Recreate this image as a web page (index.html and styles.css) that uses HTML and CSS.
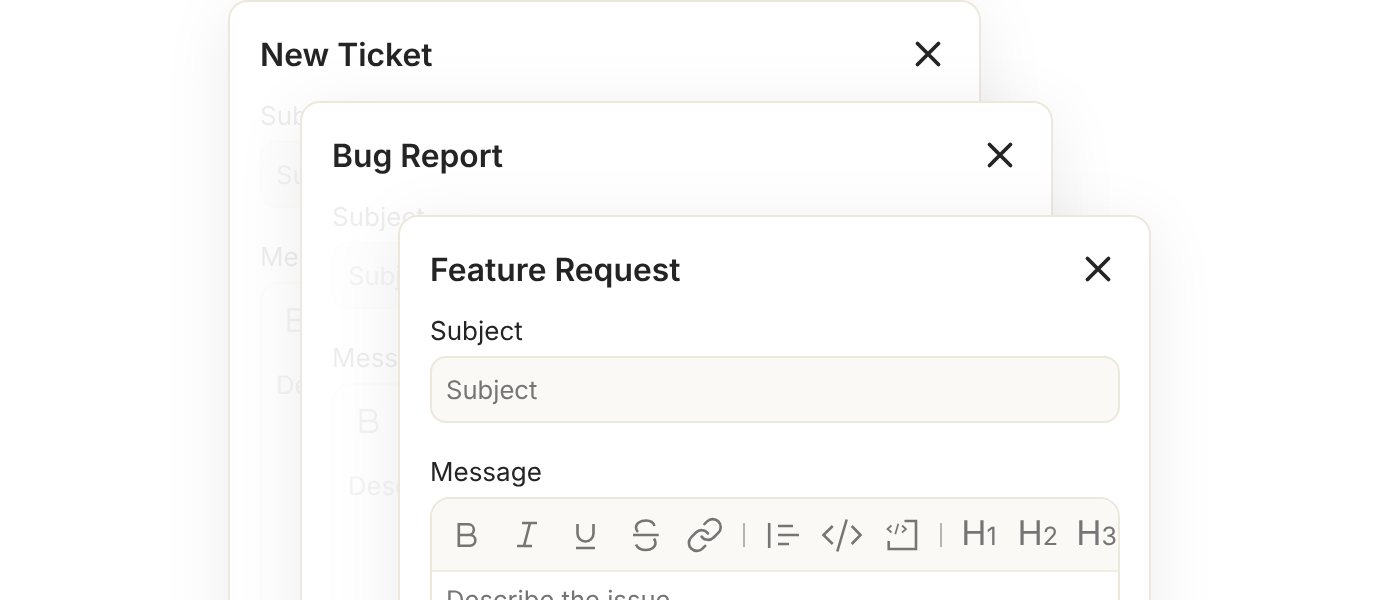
FILE: index.html
```html
<!DOCTYPE html>
<html lang="en">
<head>
<meta charset="utf-8">
<title>Ticket dialogs</title>
<link rel="stylesheet" href="styles.css">
</head>
<body>
<main class="canvas">

<section class="card card-one">
  <header class="card-head"><h2 class="card-title">New Ticket</h2>
    <svg class="close" viewBox="0 0 40 40"><path d="M9.5 9.5 30.5 30.5M30.5 9.5 9.5 30.5"/></svg></header>
  <div class="card-body faded">
    <div class="label">Subject</div>
    <div class="input">Subject</div>
    <div class="label label-second">Message</div>
    <div class="editor"><div class="toolbar"><svg class="tool" viewBox="0 0 40 40"><path d="M12.8 9.3H22.5a5.35 5.35 0 0 1 0 10.7H12.8ZM12.8 20H24a5.35 5.35 0 0 1 0 10.7H12.8Z"/></svg></div>
    <div class="editor-text">Describe the issue</div></div>
  </div>
</section>

<section class="card card-two">
  <header class="card-head"><h2 class="card-title">Bug Report</h2>
    <svg class="close" viewBox="0 0 40 40"><path d="M9.5 9.5 30.5 30.5M30.5 9.5 9.5 30.5"/></svg></header>
  <div class="card-body faded">
    <div class="label">Subject</div>
    <div class="input">Subject</div>
    <div class="label label-second">Message</div>
    <div class="editor"><div class="toolbar"><svg class="tool" viewBox="0 0 40 40"><path d="M12.8 9.3H22.5a5.35 5.35 0 0 1 0 10.7H12.8ZM12.8 20H24a5.35 5.35 0 0 1 0 10.7H12.8Z"/></svg></div>
    <div class="editor-text">Describe the issue</div></div>
  </div>
</section>

<section class="card card-three">
  <header class="card-head"><h2 class="card-title">Feature Request</h2>
    <svg class="close" viewBox="0 0 40 40"><path d="M9.5 9.5 30.5 30.5M30.5 9.5 9.5 30.5"/></svg></header>
  <div class="card-body">
    <div class="label">Subject</div>
    <div class="input">Subject</div>
    <div class="label label-second">Message</div>
    <div class="editor">
      <div class="toolbar">
        <svg class="tool" viewBox="0 0 40 40"><path d="M12.8 9.3H22.5a5.35 5.35 0 0 1 0 10.7H12.8ZM12.8 20H24a5.35 5.35 0 0 1 0 10.7H12.8Z"/></svg>
        <svg class="tool" viewBox="0 0 40 40"><path d="M16 8H31M11 31H26M24 8 18 31"/></svg>
        <svg class="tool" viewBox="0 0 40 40"><path d="M12.5 9V18.5a8 8 0 0 0 16 0V9M11 33H30"/></svg>
        <svg class="tool" viewBox="0 0 40 40"><path d="M29.5 11C28.5 7.5 25 5.5 21 5.5 15 5.5 11 8.5 11 12.5 11 14.5 12 16 13 17M8 20H33.7M29 23.5C30 25 30.5 26 30.5 28 30.5 32 26.5 35 21 35 16 35 12.5 33 11 29.5"/></svg>
        <svg class="tool" viewBox="-1 -0.5 25 25"><path class="thin-link" d="M10 13a5 5 0 0 0 7.54.54l3-3a5 5 0 0 0-7.07-7.07l-1.72 1.71M14 11a5 5 0 0 0-7.54-.54l-3 3a5 5 0 0 0 7.07 7.07l1.71-1.71"/></svg>
        <span class="sep"></span>
        <svg class="tool" viewBox="0 0 40 40"><path d="M6.2 8V33M15 11H30M15 20H36M15 29H26"/></svg>
        <svg class="tool" viewBox="0 0 40 40"><path d="M10.7 11 1.5 20 10.7 29M24.7 4.5 15.3 36.5M29.7 11 38.5 20 29.7 29"/></svg>
        <svg class="tool" viewBox="0 0 40 40"><path d="M22.5 6H34V34H6.7V26"/><path class="thin" d="M9.5 10.5 5.5 14 9.5 17.5M16.3 8.7 13.3 19.3M20 10.5 24 14 20 17.5"/></svg>
        <span class="sep"></span>
        <span class="head-tool">H<span class="head-num">1</span></span>
        <span class="head-tool">H<span class="head-num">2</span></span>
        <span class="head-tool">H<span class="head-num">3</span></span>
      </div>
      <div class="editor-text">Describe the issue</div>
    </div>
  </div>
</section>

</main>
</body>
</html>
```

FILE: styles.css
```css
* { box-sizing: border-box; }
html, body { margin: 0; height: 100%; background: #fff; }
body { overflow: hidden; font-family: Inter, "Liberation Sans", sans-serif; color: #242424; text-rendering: geometricPrecision; }
.canvas { position: relative; width: 1400px; height: 600px; overflow: hidden; }

.card {
  position: absolute;
  width: 753px;
  height: 760px;
  padding: 19px 29px 29px 30px;
  background: #fff;
  border: 2px solid #ece8dc;
  border-radius: 20px;
  box-shadow: 0 12px 70px rgba(0, 0, 0, .08);
  will-change: transform;
}
.card-one { left: 228px; top: 0; }
.card-two { left: 300px; top: 101px; }
.card-three { left: 398px; top: 215px; }

.card-head { display: flex; align-items: center; justify-content: space-between; height: 66px; }
.card-title { margin: 0; padding-top: 1px; font-size: 31.8px; font-weight: 600; line-height: 36px; }
.close { width: 40px; height: 40px; margin-right: 2px; margin-top: -1px; fill: none; stroke: #242424; stroke-width: 3.8; stroke-linecap: round; }

.faded { opacity: .08; }
.faded .toolbar { border-bottom-color: transparent; background: transparent; }

.label { font-size: 26px; font-weight: 400; line-height: 30px; margin-top: 15px; margin-bottom: -1px; }
.label-second { margin-top: 35px; }
.input {
  height: 67px;
  margin-top: 10px;
  padding: 1px 14px 0;
  display: flex;
  align-items: center;
  font-size: 25.6px;
  color: #757575;
  background: #faf9f5;
  border: 2px solid #ece8dc;
  border-radius: 16px;
}
.editor { margin-top: 10px; border: 2px solid #ece8dc; border-radius: 20px; overflow: hidden; }
.toolbar {
  display: flex;
  align-items: center;
  gap: 19.6px;
  height: 73px;
  padding: 0 0 0 14px;
  background: #faf9f5;
  border-bottom: 2px solid #f1ede3;
  white-space: nowrap;
}
.tool { flex: none; width: 40px; height: 40px; fill: none; stroke: #757575; stroke-width: 2.6; overflow: visible; }
.tool .thin { stroke-width: 1.7; }
.tool .thin-link { stroke-width: 1.65; stroke-linecap: round; }
.sep { flex: none; width: 2px; height: 24px; background: #b5b5b2; margin: 0 -2px 0 -1px; }
.sep + .head-tool { margin-left: -1px; }
.head-tool { flex: none; width: 40px; margin-right: -1px; padding-top: 2px; font-size: 34px; font-weight: 380; line-height: 40px; color: #757575; text-align: center; }
.head-num { font-size: 25px; }
.editor-text { height: 280px; padding: 14px 14px; font-size: 25.6px; line-height: 30px; color: #757575; }
```
